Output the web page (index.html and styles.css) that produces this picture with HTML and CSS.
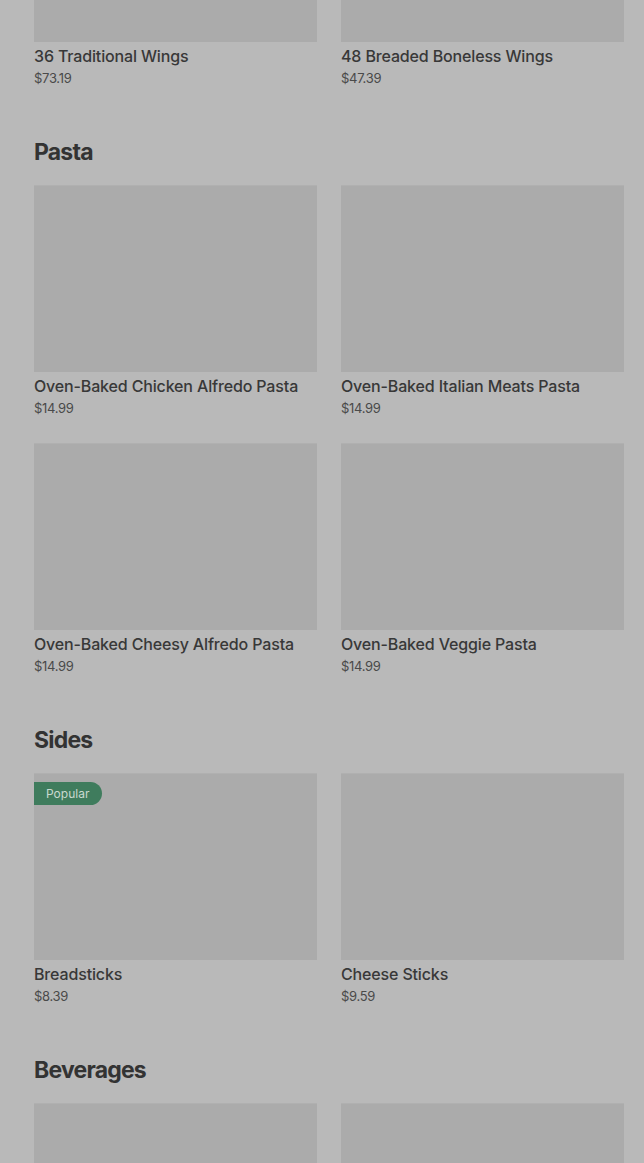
FILE: index.html
```html
<!DOCTYPE html>
<html>
<head>
<meta charset="utf-8">
<link rel="stylesheet" href="styles.css">
</head>
<body>
<main class="menu">
  <section class="section first">
    <div class="grid">
      <div class="card"><div class="img"></div><div class="name">36 Traditional Wings</div><div class="price">$73.19</div></div>
      <div class="card"><div class="img"></div><div class="name">48 Breaded Boneless Wings</div><div class="price">$47.39</div></div>
    </div>
  </section>
  <section class="section">
    <h2 class="heading">Pasta</h2>
    <div class="grid">
      <div class="card"><div class="img"></div><div class="name">Oven-Baked Chicken Alfredo Pasta</div><div class="price">$14.99</div></div>
      <div class="card"><div class="img"></div><div class="name">Oven-Baked Italian Meats Pasta</div><div class="price">$14.99</div></div>
      <div class="card"><div class="img"></div><div class="name">Oven-Baked Cheesy Alfredo Pasta</div><div class="price">$14.99</div></div>
      <div class="card"><div class="img"></div><div class="name">Oven-Baked Veggie Pasta</div><div class="price">$14.99</div></div>
    </div>
  </section>
  <section class="section">
    <h2 class="heading">Sides</h2>
    <div class="grid">
      <div class="card"><div class="img"><span class="badge">Popular</span></div><div class="name">Breadsticks</div><div class="price">$8.39</div></div>
      <div class="card"><div class="img"></div><div class="name">Cheese Sticks</div><div class="price">$9.59</div></div>
    </div>
  </section>
  <section class="section">
    <h2 class="heading">Beverages</h2>
    <div class="grid">
      <div class="card"><div class="img"></div></div>
      <div class="card"><div class="img"></div></div>
    </div>
  </section>
</main>
</body>
</html>
```
FILE: styles.css
```css
html, body {
  margin: 0;
  padding: 0;
  background: #b9b9b9;
  height: 1163px;
  overflow: hidden;
}
body {
  font-family: Inter, "Noto Sans", "Liberation Sans", sans-serif;
  color: #353535;
}
.menu {
  padding: 0 20px 0 34px;
  margin-top: -145px;
}
.section {
  margin-bottom: 47px;
}
.heading {
  margin: 0 0 17px;
  font-size: 23px;
  line-height: 32px;
  font-weight: 700;
  letter-spacing: -0.8px;
  color: #333;
}
.grid {
  display: grid;
  grid-template-columns: 283px 283px;
  column-gap: 24px;
  row-gap: 24px;
}
.card {
  display: flex;
  flex-direction: column;
}
.img {
  position: relative;
  height: 187px;
  background: #ababab;
  border-top: 1px solid #b0b0b0;
  box-sizing: border-box;
}
.badge {
  position: absolute;
  left: 0;
  top: 8px;
  height: 23px;
  line-height: 23px;
  padding: 0 13px 0 12px;
  background: #3f7c5d;
  color: #c9d9cf;
  font-size: 12px;
  border-radius: 0 12px 12px 0;
}
.name {
  margin-top: 2px;
  font-size: 16px;
  line-height: 24px;
  font-weight: 500;
  color: #383838;
  letter-spacing: -0.15px;
  white-space: nowrap;
}
.price {
  font-size: 13px;
  line-height: 21px;
  color: #4a4a4a;
  letter-spacing: -0.3px;
}
```
